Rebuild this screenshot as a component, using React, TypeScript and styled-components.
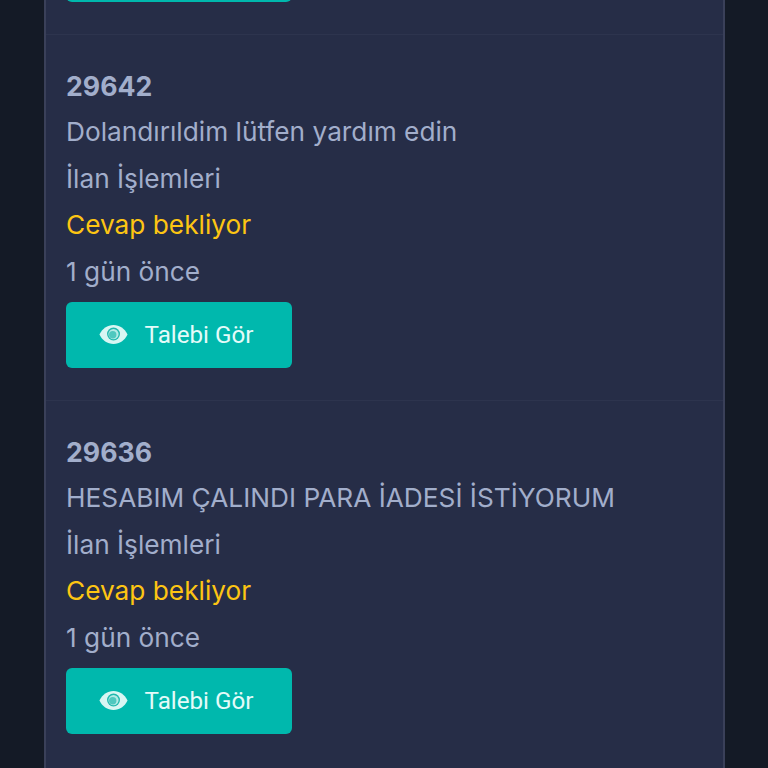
import * as React from 'react';
import styled, { createGlobalStyle } from 'styled-components';

const GlobalStyle = createGlobalStyle`
  html, body {
    margin: 0;
    padding: 0;
    background-color: #141a26;
  }
`;

const Page = styled.div`
  width: 768px;
  height: 768px;
  overflow: hidden;
  display: flex;
  justify-content: center;
  align-items: flex-start;
  background-color: #141a26;
  font-family: Inter, 'Liberation Sans', sans-serif;
`;

const Card = styled.div`
  box-sizing: border-box;
  width: 681px;
  margin-left: 1px;
  min-height: 768px;
  background-color: #262d47;
  border-left: 2px solid #3a4059;
  border-right: 2px solid #3a4059;
`;

const Row = styled.div`
  padding: 29px 22px 32.5px 20px;
  border-top: 1px solid #2d344e;
`;

const TopRow = styled.div`
  padding: 0 20px 32.5px;
`;

const Number = styled.div`
  font-size: 26.7px;
  line-height: 45px;
  font-weight: 700;
  color: #a2aecb;
`;

const Line = styled.div<{ $warn?: boolean }>`
  font-size: 26.25px;
  line-height: 46.5px;
  color: ${(p) => (p.$warn ? '#fdc513' : '#a2aecb')};
`;

const Button = styled.button<{ $clipped?: boolean }>`
  display: flex;
  align-items: center;
  justify-content: center;
  gap: 17px;
  box-sizing: border-box;
  width: 226px;
  height: 66px;
  margin-top: ${(p) => (p.$clipped ? '-64.5px' : '6.5px')};
  padding: 0 6px 0 0;
  border: none;
  border-radius: 6px;
  background-color: #00b8ad;
  color: #e4fbf9;
  font-family: Roboto, 'Liberation Sans', sans-serif;
  font-size: 24.2px;
`;

function EyeIcon() {
  return (
    <svg width="29" height="19" viewBox="0 0 30 20" aria-hidden="true">
      <path
        fill="#d8f6f3"
        d="M15 0C8.600 0 3.100 3.900 0.200 10 3.100 16.100 8.600 20 15 20s11.900-3.900 14.800-10C26.900 3.900 21.400 0 15 0z"
      />
      <circle cx="15" cy="9.500" r="6.800" fill="#1fb8ad" />
      <circle cx="15" cy="9.500" r="5.400" fill="#b4ebe6" />
      <circle cx="14.200" cy="10.300" r="3.900" fill="#4fc8bf" />
    </svg>
  );
}

const tickets = [
  { id: '29642', title: 'Dolandırıldim lütfen yardım edin' },
  { id: '29636', title: 'HESABIM ÇALINDI PARA İADESİ İSTİYORUM' },
];

export default function App() {
  return (
    <>
      <GlobalStyle />
      <Page>
        <Card>
          <TopRow>
            <Button $clipped />
          </TopRow>
          {tickets.map((t) => (
            <Row key={t.id}>
              <Number>{t.id}</Number>
              <Line>{t.title}</Line>
              <Line>İlan İşlemleri</Line>
              <Line $warn>Cevap bekliyor</Line>
              <Line>1 gün önce</Line>
              <Button>
                <EyeIcon />
                Talebi Gör
              </Button>
            </Row>
          ))}
        </Card>
      </Page>
    </>
  );
}
